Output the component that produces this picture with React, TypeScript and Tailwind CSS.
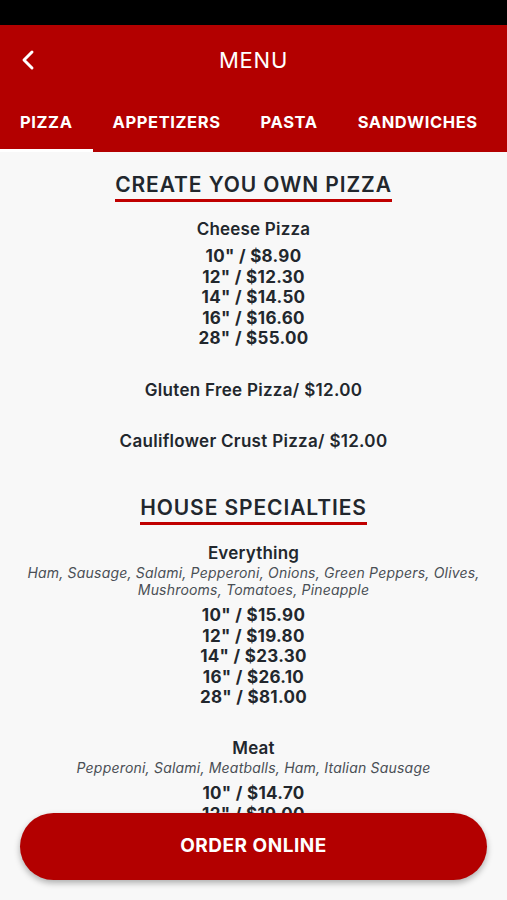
import { ChevronLeft } from "lucide-react";

type Item = {
  name: string;
  desc?: string;
  prices: string[];
};

const tabs = ["PIZZA", "APPETIZERS", "PASTA", "SANDWICHES"];

const specialties: Item[] = [
  {
    name: "Everything",
    desc: "Ham, Sausage, Salami, Pepperoni, Onions, Green Peppers, Olives, Mushrooms, Tomatoes, Pineapple",
    prices: ['10" / $15.90', '12" / $19.80', '14" / $23.30', '16" / $26.10', '28" / $81.00'],
  },
  {
    name: "Meat",
    desc: "Pepperoni, Salami, Meatballs, Ham, Italian Sausage",
    prices: ['10" / $14.70', '12" / $19.00', '14" / $22.40', '16" / $25.20', '28" / $78.00'],
  },
];

function SectionTitle({ title }: { title: string }) {
  return (
    <div className="flex justify-center">
      <h2 className="border-b-[3px] border-[#c00000] pb-[1px] text-[21px] font-semibold leading-[26px] tracking-[0.9px] text-[#22272d]">
        {title}
      </h2>
    </div>
  );
}

function MenuItem({ item }: { item: Item }) {
  return (
    <div className="flex flex-col items-center text-center">
      <div className="text-[17px] font-semibold leading-[22px] tracking-[0.2px] text-[#22272d]">{item.name}</div>
      {item.desc && (
        <div className="px-6 text-[14px] italic leading-[17px] tracking-[0.2px] text-[#4a4f55]">{item.desc}</div>
      )}
      <div className={`${item.desc ? "mt-[7px]" : "mt-[6px]"} flex flex-col`}>
        {item.prices.map((p) => (
          <span key={p} className="text-[17px] font-bold leading-[20.6px] tracking-[0.3px] text-[#22272d]">
            {p}
          </span>
        ))}
      </div>
    </div>
  );
}

export default function App() {
  return (
    <div className="relative flex h-[900px] w-full flex-col overflow-hidden bg-[#f8f8f8] font-['Inter','Noto_Sans',sans-serif]">
      <div className="h-[25px] shrink-0 bg-black" />

      <header className="shrink-0 bg-[#b30000] text-white">
        <div className="relative flex h-[70px] items-center justify-center">
          <button className="absolute left-[12px] top-[19px]">
            <ChevronLeft size={32} strokeWidth={2.2} />
          </button>
          <h1 className="text-[22px] font-normal tracking-[0.8px]">MENU</h1>
        </div>
        <nav className="flex h-[57px] overflow-hidden whitespace-nowrap">
          {tabs.map((t, i) => (
            <div
              key={t}
              className={`flex shrink-0 items-center px-5 text-[16.5px] font-bold tracking-[0.6px] ${
                i === 0 ? "border-b-[3px] border-white" : "border-b-[3px] border-transparent"
              }`}
            >
              {t}
            </div>
          ))}
        </nav>
      </header>

      <main className="flex-1 overflow-hidden pt-[20px]">
        <SectionTitle title="CREATE YOU OWN PIZZA" />
        <div className="mt-[16px]">
          <MenuItem item={{ name: "Cheese Pizza", prices: ['10" / $8.90', '12" / $12.30', '14" / $14.50', '16" / $16.60', '28" / $55.00'] }} />
        </div>
        <div className="mt-[30px] text-center text-[17px] font-semibold leading-[22px] tracking-[0.3px] text-[#22272d]">
          Gluten Free Pizza/ $12.00
        </div>
        <div className="mt-[29px] text-center text-[17px] font-semibold leading-[22px] tracking-[0.3px] text-[#22272d]">
          Cauliflower Crust Pizza/ $12.00
        </div>

        <div className="mt-[43px]">
          <SectionTitle title="HOUSE SPECIALTIES" />
        </div>
        <div className="mt-[17px] flex flex-col gap-[29px]">
          {specialties.map((s) => (
            <MenuItem key={s.name} item={s} />
          ))}
        </div>
      </main>
      <div className="h-[20px] shrink-0" />

      <div className="absolute bottom-[20px] left-[20px] right-[20px]">
        <button className="flex h-[67px] w-full items-center justify-center rounded-full bg-[#b30000] text-[19px] font-bold tracking-[0.5px] text-white shadow-[0_3px_6px_rgba(0,0,0,0.3)]">
          ORDER ONLINE
        </button>
      </div>
    </div>
  );
}
